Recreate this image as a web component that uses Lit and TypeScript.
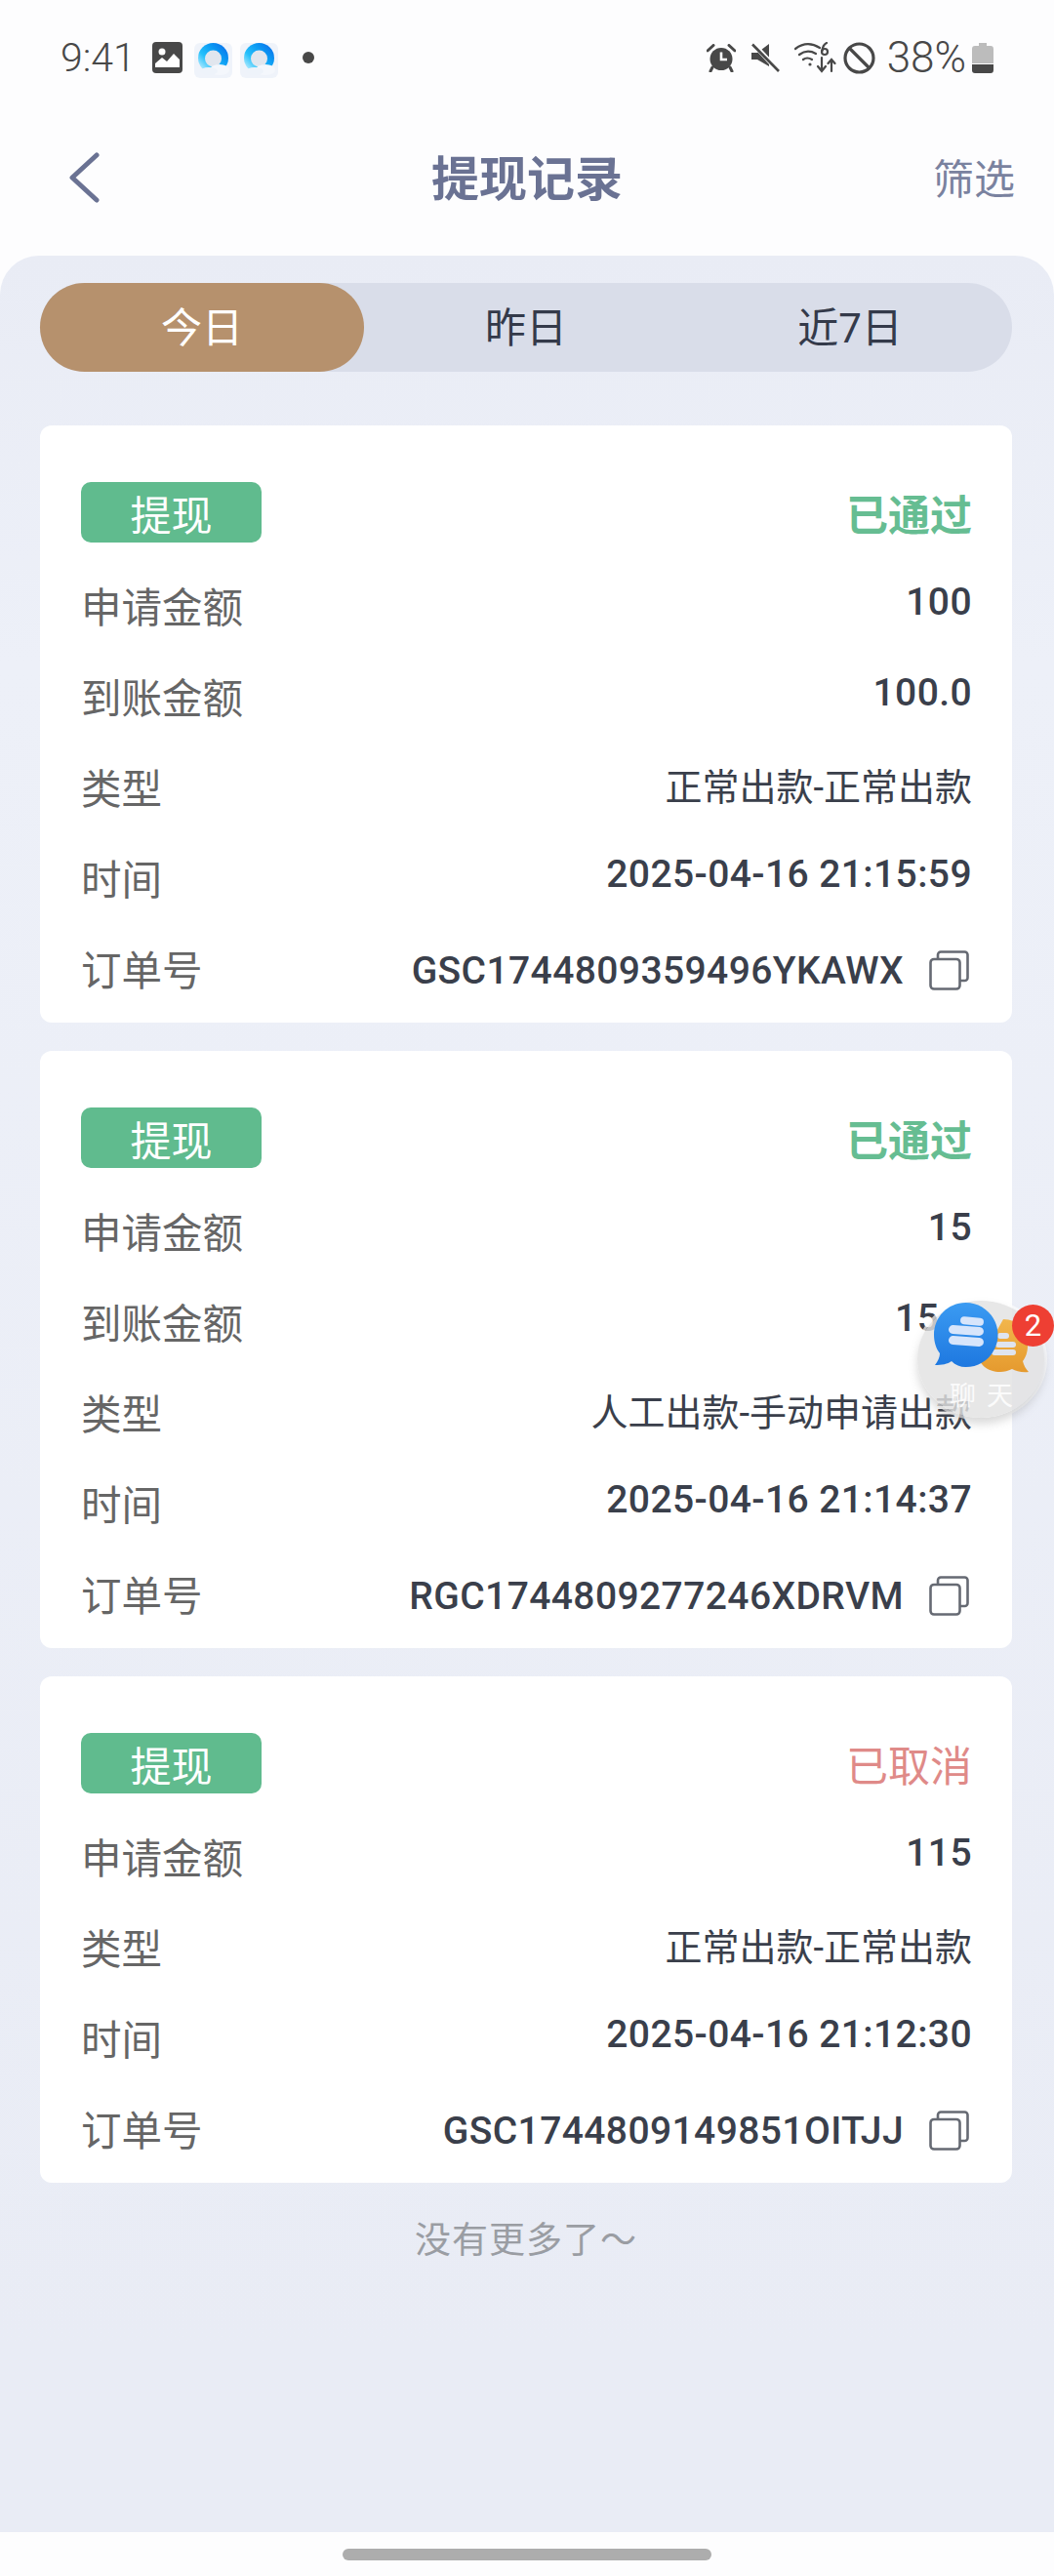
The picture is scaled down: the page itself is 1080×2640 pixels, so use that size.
import { LitElement, html, css, svg } from "lit";
import { customElement } from "lit/decorators.js";

interface Rec { state: string; cancelled?: boolean; rows: [string, string][]; order: string }

const records: Rec[] = [
  { state: "已通过", rows: [["申请金额", "100"], ["到账金额", "100.0"], ["类型", "正常出款-正常出款"], ["时间", "2025-04-16 21:15:59"]], order: "GSC1744809359496YKAWX" },
  { state: "已通过", rows: [["申请金额", "15"], ["到账金额", "15.0"], ["类型", "人工出款-手动申请出款"], ["时间", "2025-04-16 21:14:37"]], order: "RGC1744809277246XDRVM" },
  { state: "已取消", cancelled: true, rows: [["申请金额", "115"], ["类型", "正常出款-正常出款"], ["时间", "2025-04-16 21:12:30"]], order: "GSC1744809149851OITJJ" },
];

const appIcon = (id: string) => html`<svg class="app" width="39" height="36" viewBox="0 0 39 36">
  <defs><linearGradient id=${id} x1="0.1" y1="0.9" x2="0.9" y2="0.1"><stop offset="0" stop-color="#bdeeff"/><stop offset=".35" stop-color="#25c0fb"/><stop offset=".7" stop-color="#0b9af3"/><stop offset="1" stop-color="#0a74ec"/></linearGradient></defs>
  <rect width="39" height="36" rx="6" fill="#eff3fa"/>
  <circle cx="19.5" cy="15.5" r="15.5" fill="url(#${id})"/>
  <circle cx="19.5" cy="16" r="8.5" fill="#e1e6ee"/>
  <ellipse cx="26" cy="27.5" rx="10" ry="5.5" fill="#f4f7fc"/>
  <ellipse cx="15" cy="29" rx="9" ry="4" fill="#eef3fa"/>
</svg>`;

const copyIcon = svg`<rect x="1.5" y="9" width="30" height="30.5" rx="3.5" fill="#fff" stroke="#666a73" stroke-width="2.6"/><path d="M9 8.5V4.5A3 3 0 0 1 12 1.5H36.5A3 3 0 0 1 39.5 4.5V28A3 3 0 0 1 36.5 31H32" fill="none" stroke="#666a73" stroke-width="2.6"/>`;

@customElement("app-root")
export class AppRoot extends LitElement {
  static styles = css`
    :host { display: block; position: relative; width: 1080px; height: 2640px; overflow: hidden; background: #fdfdfe;
      font-family: Roboto, "Noto Sans CJK SC", sans-serif; }
    .page { display: flex; flex-direction: column; height: 100%; }
    .status { height: 118px; flex: none; display: flex; align-items: center; padding: 0 62px; box-sizing: border-box; color: #484848; }
    .time { font-size: 41px; font-weight: 300; width: 94px; }
    .app { margin: 6px 0 0 8px; }
    .gap { width: 4px; }
    .sdot { width: 12px; height: 12px; border-radius: 50%; background: #484848; margin-left: 25px; }
    .spacer { flex: 1; }
    .status .r { display: flex; align-items: center; }
    .s15 { margin-left: 15px; }
    .s7 { margin-left: 7px; }
    .pct { font-size: 44px; font-weight: 300; margin: 0 6px 0 12px; }
    .nav { flex: none; height: 144px; box-sizing: border-box; padding: 0 40px 16px 40px; display: grid; grid-template-columns: 1fr auto 1fr; align-items: center; }
    .nav svg { margin-left: 30px; }
    .nav h1 { margin: 0 0 5px; font-size: 49px; font-weight: 700; color: #6a7293; }
    .nav .filter { justify-self: end; font-size: 42px; color: #7a829f; margin-bottom: 4px; }
    .panel { flex: 1; min-height: 0; background: linear-gradient(#e9ecf5, #edf0f8 18%, #e9ecf5 92%); border-radius: 40px 40px 0 0; padding: 28px 43px 0 41px; }
    .tabs { height: 91px; border-radius: 46px; background: #d9dde9; display: grid; grid-template-columns: repeat(3, 1fr); margin-bottom: 55px; }
    .tab { display: flex; align-items: center; justify-content: center; font-size: 42px; color: #343a4a; border-radius: 46px; padding-bottom: 7px; box-sizing: border-box; }
    .tab.on { background: #b6916d; color: #fff; }
    .card { background: #fff; border-radius: 12px; padding: 58px 41px 7px 42px; margin-bottom: 29px; }
    .head { display: flex; justify-content: space-between; align-items: center; height: 62px; margin-bottom: 20px; }
    .tag { width: 185px; height: 62px; border-radius: 10px; background: #60bb8e; color: #fff; font-size: 42px; display: flex; align-items: center; justify-content: center; }
    .st { font-size: 43px; font-weight: 700; color: #66bd92; }
    .st.x { color: #df8a88; font-weight: 400; }
    .row { height: 93px; display: flex; justify-content: space-between; align-items: center; }
    .lab { font-size: 41.5px; color: #666; margin-bottom: 5px; }
    .val { font-size: 39px; font-weight: 500; color: #3a3f4b; margin-bottom: 11px; letter-spacing: .4px; }
    .val.cjk { font-size: 38px; font-weight: 400; letter-spacing: 0; }
    .ord { display: flex; align-items: center; margin-bottom: 0; }
    .ord svg { margin-left: 26px; margin-right: 3px; }
    .more { text-align: center; font-size: 37px; color: #9a9da3; letter-spacing: 1px; margin-top: 6px; }
    .bottom { flex: none; height: 45px; display: flex; justify-content: center; padding-top: 17px; box-sizing: border-box; }
    .pill { width: 378px; height: 12px; border-radius: 6px; background: #adadad; }
    .chat { position: absolute; left: 940px; top: 1333px; width: 130px; height: 120px; }
    .chat .disc { position: absolute; left: 0; top: 0; width: 130px; height: 120px; border-radius: 50%; background: rgba(226,226,226,.82); box-shadow: 0 6px 10px rgba(120,120,120,.28), 0 0 0 3px rgba(255,255,255,.7); }
    .chat svg { position: absolute; left: 0; top: 0; }
    .chat .txt { position: absolute; left: 33px; top: 76px; font-size: 27px; color: rgba(255,255,255,.85); letter-spacing: 11px; white-space: nowrap; }
    .badge { position: absolute; left: 97px; top: 4px; width: 43px; height: 43px; border-radius: 50%; background: #ee3f33; color: #fff; font-size: 31px; display: flex; align-items: center; justify-content: center; }
  `;

  private isCjk(v: string) { return /[\u4e00-\u9fff]/.test(v); }

  render() {
    return html`<div class="page">
      <div class="status">
        <span class="time">9:41</span>
        <svg width="31" height="32" viewBox="0 0 31 32"><rect width="31" height="32" rx="4" fill="#484848"/><circle cx="10" cy="10" r="3.5" fill="#fff"/><path d="M3 26 L3 22 L10 16 L15 20 L22 12 L28 18 L28 26 Z" fill="#fff"/></svg>
        <span class="gap"></span>${appIcon("g1")}${appIcon("g2")}
        <span class="sdot"></span>
        <span class="spacer"></span>
        <div class="r">
          <svg width="30" height="29" viewBox="0 0 30 29"><path d="M1 7 L7 1.5 M29 7 L23 1.5" stroke="#484848" stroke-width="3" stroke-linecap="round"/><circle cx="15" cy="15.5" r="11.5" fill="#484848"/><path d="M15 8.5V16H21" stroke="#fff" stroke-width="2.6" fill="none"/><path d="M6 24L4 28M24 24L26 28" stroke="#484848" stroke-width="3" stroke-linecap="round"/></svg>
          <svg class="s15" width="30" height="30" viewBox="0 0 30 30"><path d="M1 10H7L19 1V24L7 17H1Z" fill="#484848"/><path d="M3 1 L29 29" stroke="#fff" stroke-width="5"/><path d="M2 1.5 L29 29" stroke="#484848" stroke-width="2.6"/></svg>
          <svg class="s15" width="43" height="32" viewBox="0 0 43 32" fill="none" stroke="#484848" stroke-width="2.2" stroke-linecap="round"><path d="M1 7Q13 -2 26 6M5 13Q13 7 22 12M9 18Q13 15 18 18"/><circle cx="16" cy="23" r="1.6" fill="#484848" stroke="none"/><circle cx="31" cy="10" r="3"/><path d="M33 1Q29 3 28.5 9"/><path d="M28 16V29M24 25L28 30L32 25M38 30V19M34.5 22L38 18L41.5 22"/></svg>
          <svg class="s7" width="33" height="33" viewBox="0 0 33 33" fill="none" stroke="#484848" stroke-width="3.2"><circle cx="16.5" cy="16.5" r="14.5"/><path d="M6 6L27 27"/></svg>
          <span class="pct">38%</span>
          <svg width="22" height="31" viewBox="0 0 22 31"><path d="M7 0H15V3H19A3 3 0 0 1 22 6V21H0V6A3 3 0 0 1 3 3H7Z" fill="#bcbcbc"/><path d="M0 22H22V28A3 3 0 0 1 19 31H3A3 3 0 0 1 0 28Z" fill="#484848"/></svg>
        </div>
      </div>
      <div class="nav">
        <svg width="32" height="52" viewBox="0 0 32 52" fill="none" stroke="#6a7293" stroke-width="5" stroke-linecap="round" stroke-linejoin="round"><path d="M29 3 L4 26 L29 49"/></svg>
        <h1>提现记录</h1>
        <span class="filter">筛选</span>
      </div>
      <div class="panel">
        <div class="tabs"><div class="tab on">今日</div><div class="tab">昨日</div><div class="tab">近7日</div></div>
        ${records.map((r) => html`<div class="card">
          <div class="head"><span class="tag">提现</span><span class="st ${r.cancelled ? "x" : ""}">${r.state}</span></div>
          ${r.rows.map(([k, v]) => html`<div class="row"><span class="lab">${k}</span><span class="val ${this.isCjk(v) ? "cjk" : ""}">${v}</span></div>`)}
          <div class="row"><span class="lab">订单号</span><span class="val ord">${r.order}<svg width="41" height="41" viewBox="0 0 41 41">${copyIcon}</svg></span></div>
        </div>`)}
        <div class="more">没有更多了～</div>
      </div>
      <div class="bottom"><div class="pill"></div></div>
    </div>
    <div class="chat">
      <div class="disc"></div>
      <svg width="130" height="120" viewBox="0 0 130 120">
        <defs>
          <linearGradient id="bl" x1="0" y1="0" x2="0" y2="1"><stop offset="0" stop-color="#3b9bf2"/><stop offset="1" stop-color="#1e78e0"/></linearGradient>
          <linearGradient id="or" x1="0" y1="0" x2="0" y2="1"><stop offset="0" stop-color="#f2b64c"/><stop offset="1" stop-color="#e59a2e"/></linearGradient>
        </defs>
        <path d="M88 19 C103 19 113 31 113 46 C113 53 111 58 108 62 C109 66 111 70 114 73 C107 74 101 72 97 70 C93 72 89 73 85 73 C75 73 68 69 64 62 Z" fill="url(#or)"/>
        <g fill="#dfe4ef"><rect x="82" y="33" width="12" height="6" rx="3"/><rect x="80" y="42" width="21" height="6" rx="3"/><rect x="76" y="50" width="25" height="6" rx="3"/></g>
        <path d="M49.5 2 C31 2 17 17 17 35 C17 42 19 49 23 54 C23 58 21 62 18 66 C25 66 31 65 35 62 C39 66 44 68 49.5 68 C68 68 82.5 53 82.5 35 C82.5 17 68 2 49.5 2 Z" fill="url(#bl)"/>
        <g fill="#d7e5fb"><rect x="44" y="17" width="24" height="8" rx="4" transform="rotate(6 56 21)"/><rect x="32" y="26" width="36" height="9" rx="4.5" transform="rotate(4 50 30)"/><rect x="32" y="37" width="36" height="9" rx="4.5" transform="rotate(4 50 41)"/></g>
      </svg>
      <div class="txt">聊天</div>
      <div class="badge">2</div>
    </div>`;
  }
}
